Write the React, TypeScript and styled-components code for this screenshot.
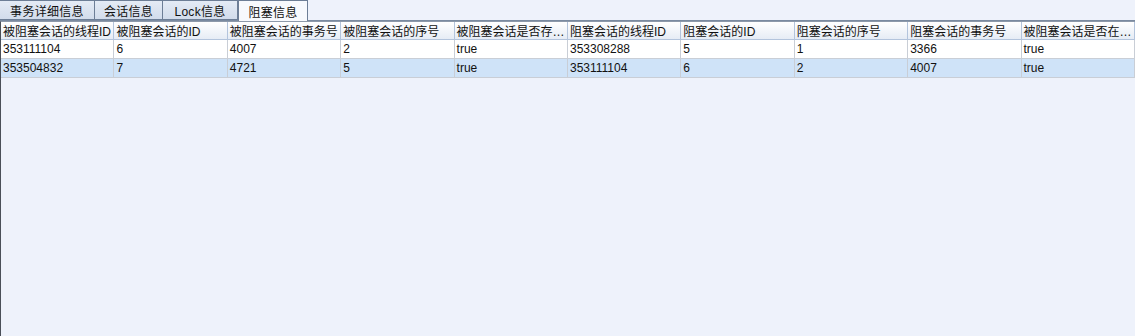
import React from "react";
import styled, { createGlobalStyle } from "styled-components";

const Global = createGlobalStyle`
  html, body { margin: 0; padding: 0; background: #eef2fb; }
  body { font-family: "Liberation Sans", "Noto Sans CJK SC", sans-serif; font-size: 12px; color: #000; }
`;

const Page = styled.div`
  width: 1135px;
  height: 336px;
  display: flex;
  flex-direction: column;
  background: #eef2fb;
  overflow: hidden;
`;

const TabBar = styled.div`
  display: flex;
  align-items: flex-end;
  height: 21px;
  box-sizing: border-box;
  border-bottom: 1px solid #7a8aa0;
  background: #eef2fb;
`;

const Tab = styled.div<{ $active?: boolean; $w: number }>`
  width: ${(p) => p.$w}px;
  height: ${(p) => (p.$active ? 21 : 20)}px;
  margin-bottom: ${(p) => (p.$active ? -1 : 0)}px;
  box-sizing: border-box;
  display: flex;
  align-items: center;
  justify-content: center;
  border: 1px solid #6d7e96;
  border-left-width: ${(p) => (p.$active ? 1 : 0)}px;
  border-bottom: ${(p) => (p.$active ? "none" : "1px solid #6d7e96")};
  background: ${(p) =>
    p.$active ? "#f7f9fd" : "linear-gradient(#e4ebf5, #d2dceb)"};
  font-size: 12px;
  letter-spacing: 0.3px;
  color: #111;
  &:first-child { border-left-width: 0; }
`;

const TablePanel = styled.div`
  flex: 1;
  border-left: 1px solid #4a4f58;
  border-top: 1px solid #8d99aa;
  background: #eef2fb;
`;

const Grid = styled.div`
  display: grid;
  grid-template-columns: repeat(10, 113.4px);
`;

const HeadCell = styled.div`
  height: 18px;
  box-sizing: border-box;
  padding: 0 2px;
  display: flex;
  align-items: center;
  white-space: nowrap;
  overflow: hidden;
  background: linear-gradient(#ffffff, #e6ecf5);
  border-right: 1px solid #b3c4dc;
  border-bottom: 1px solid #b3c4dc;
  font-size: 12px;
  color: #111;
`;

const Cell = styled.div<{ $sel?: boolean }>`
  height: 19px;
  box-sizing: border-box;
  padding: 0 2px;
  display: flex;
  align-items: center;
  white-space: nowrap;
  overflow: hidden;
  background: ${(p) => (p.$sel ? "#cfe3f8" : "#ffffff")};
  border-right: 1px solid #c9ced6;
  border-bottom: 1px solid #c9ced6;
  font-size: 12px;
  color: #111;
`;

const tabs = [
  { label: "事务详细信息", w: 95 },
  { label: "会话信息", w: 68 },
  { label: "Lock信息", w: 75 },
  { label: "阻塞信息", w: 70, active: true },
];

const headers = [
  "被阻塞会话的线程ID",
  "被阻塞会话的ID",
  "被阻塞会话的事务号",
  "被阻塞会话的序号",
  "被阻塞会话是否存…",
  "阻塞会话的线程ID",
  "阻塞会话的ID",
  "阻塞会话的序号",
  "阻塞会话的事务号",
  "被阻塞会话是否在…",
];

const rows = [
  ["353111104", "6", "4007", "2", "true", "353308288", "5", "1", "3366", "true"],
  ["353504832", "7", "4721", "5", "true", "353111104", "6", "2", "4007", "true"],
];

export default function App() {
  return (
    <Page>
      <Global />
      <TabBar>
        {tabs.map((t) => (
          <Tab key={t.label} $w={t.w} $active={t.active}>
            {t.label}
          </Tab>
        ))}
      </TabBar>
      <TablePanel>
        <Grid>
          {headers.map((h) => (
            <HeadCell key={h}>{h}</HeadCell>
          ))}
          {rows.map((r, i) =>
            r.map((c, j) => (
              <Cell key={`${i}-${j}`} $sel={i === 1}>
                {c}
              </Cell>
            ))
          )}
        </Grid>
      </TablePanel>
    </Page>
  );
}
